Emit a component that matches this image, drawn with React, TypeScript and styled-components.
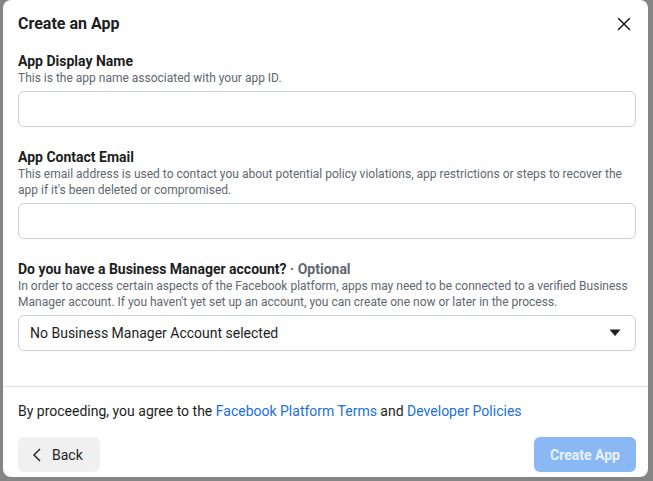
import React from "react";
import styled, { createGlobalStyle } from "styled-components";

const Global = createGlobalStyle`
  html, body { margin: 0; padding: 0; background: #858585; }
  body { font-family: Roboto, "Liberation Sans", Arial, sans-serif; color: #1c1e21; }
  * { box-sizing: border-box; }
`;

const Backdrop = styled.div`
  width: 653px;
  height: 481px;
  background: #858585;
  padding: 0 5px 4px 3px;
  display: flex;
`;

const Modal = styled.div`
  flex: 1;
  background: #fff;
  border-radius: 8px;
  display: flex;
  flex-direction: column;
  overflow: hidden;
`;

const Header = styled.div`
  height: 48px;
  display: flex;
  align-items: center;
  justify-content: space-between;
  padding: 0 14px 0 15px;
`;

const Title = styled.h1`
  margin: 0;
  font-size: 16px;
  font-weight: 700;
  line-height: 20px;
`;

const CloseButton = styled.button`
  border: 0;
  background: none;
  padding: 0;
  width: 20px;
  height: 20px;
  display: flex;
  align-items: center;
  justify-content: center;
  color: #1c1e21;
`;

const Body = styled.div`
  padding: 4px 12px 0 15px;
  display: flex;
  flex-direction: column;
  gap: 21px;
`;

const Field = styled.div`
  display: flex;
  flex-direction: column;
`;

const Label = styled.div`
  font-size: 14px;
  font-weight: 700;
  line-height: 18px;
`;

const Optional = styled.span`
  color: #606770;
  font-weight: 700;
`;

const Desc = styled.div`
  font-size: 12px;
  line-height: 16px;
  color: #606770;
  margin-bottom: 5px;
`;

const Input = styled.input`
  height: 36px;
  width: 100%;
  border: 1px solid #ccd0d5;
  border-radius: 6px;
  padding: 0 11px;
  font: inherit;
  font-size: 14px;
  outline: none;
`;

const Select = styled.div`
  height: 36px;
  border: 1px solid #ccd0d5;
  border-radius: 6px;
  padding: 0 14px 0 11px;
  display: flex;
  align-items: center;
  justify-content: space-between;
  font-size: 14px;
  color: #1c1e21;
`;

const Divider = styled.div`
  height: 1px;
  background: #dadde1;
  margin-top: 35px;
`;

const Footer = styled.div`
  padding: 15px 12px 0 15px;
  display: flex;
  flex-direction: column;
  gap: 17px;
`;

const Terms = styled.div`
  font-size: 14px;
  line-height: 18px;
`;

const Link = styled.a`
  color: #216fdb;
  text-decoration: none;
`;

const Buttons = styled.div`
  display: flex;
  justify-content: space-between;
`;

const Button = styled.button<{ $primary?: boolean }>`
  height: 35px;
  border: 0;
  border-radius: 6px;
  font-family: inherit;
  font-size: 14px;
  display: flex;
  align-items: center;
  gap: 10px;
  padding: ${(p) => (p.$primary ? "0 16px" : "0 17px 0 14px")};
  background: ${(p) => (p.$primary ? "#8ab8f4" : "#f0f0f0")};
  color: ${(p) => (p.$primary ? "#e8f1fd" : "#1c1e21")};
  font-weight: ${(p) => (p.$primary ? 700 : 400)};
`;

export default function App() {
  return (
    <>
      <Global />
      <Backdrop>
        <Modal>
          <Header>
            <Title>Create an App</Title>
            <CloseButton aria-label="Close">
              <svg width="14" height="14" viewBox="0 0 14 14">
                <path d="M1.5 1.5 L12.5 12.5 M12.5 1.5 L1.5 12.5" stroke="#1c1e21" strokeWidth="1.5" strokeLinecap="round" />
              </svg>
            </CloseButton>
          </Header>
          <Body>
            <Field>
              <Label>App Display Name</Label>
              <Desc>This is the app name associated with your app ID.</Desc>
              <Input />
            </Field>
            <Field>
              <Label>App Contact Email</Label>
              <Desc>
                This email address is used to contact you about potential policy violations, app restrictions or steps to recover the app if it's been deleted or compromised.
              </Desc>
              <Input />
            </Field>
            <Field>
              <Label>
                Do you have a Business Manager account? <Optional>· Optional</Optional>
              </Label>
              <Desc>
                In order to access certain aspects of the Facebook platform, apps may need to be connected to a verified Business Manager account. If you haven't yet set up an account, you can create one now or later in the process.
              </Desc>
              <Select>
                <span>No Business Manager Account selected</span>
                <svg width="12" height="8" viewBox="0 0 12 8">
                  <path d="M0.5 0.5 H11.5 L6 7 Z" fill="#1c1e21" />
                </svg>
              </Select>
            </Field>
          </Body>
          <Divider />
          <Footer>
            <Terms>
              By proceeding, you agree to the <Link href="#">Facebook Platform Terms</Link> and{" "}
              <Link href="#">Developer Policies</Link>
            </Terms>
            <Buttons>
              <Button>
                <svg width="10" height="14" viewBox="0 0 10 14">
                  <path d="M8 1 L2 7 L8 13" stroke="#1c1e21" strokeWidth="1.4" fill="none" />
                </svg>
                Back
              </Button>
              <Button $primary>Create App</Button>
            </Buttons>
          </Footer>
        </Modal>
      </Backdrop>
    </>
  );
}
